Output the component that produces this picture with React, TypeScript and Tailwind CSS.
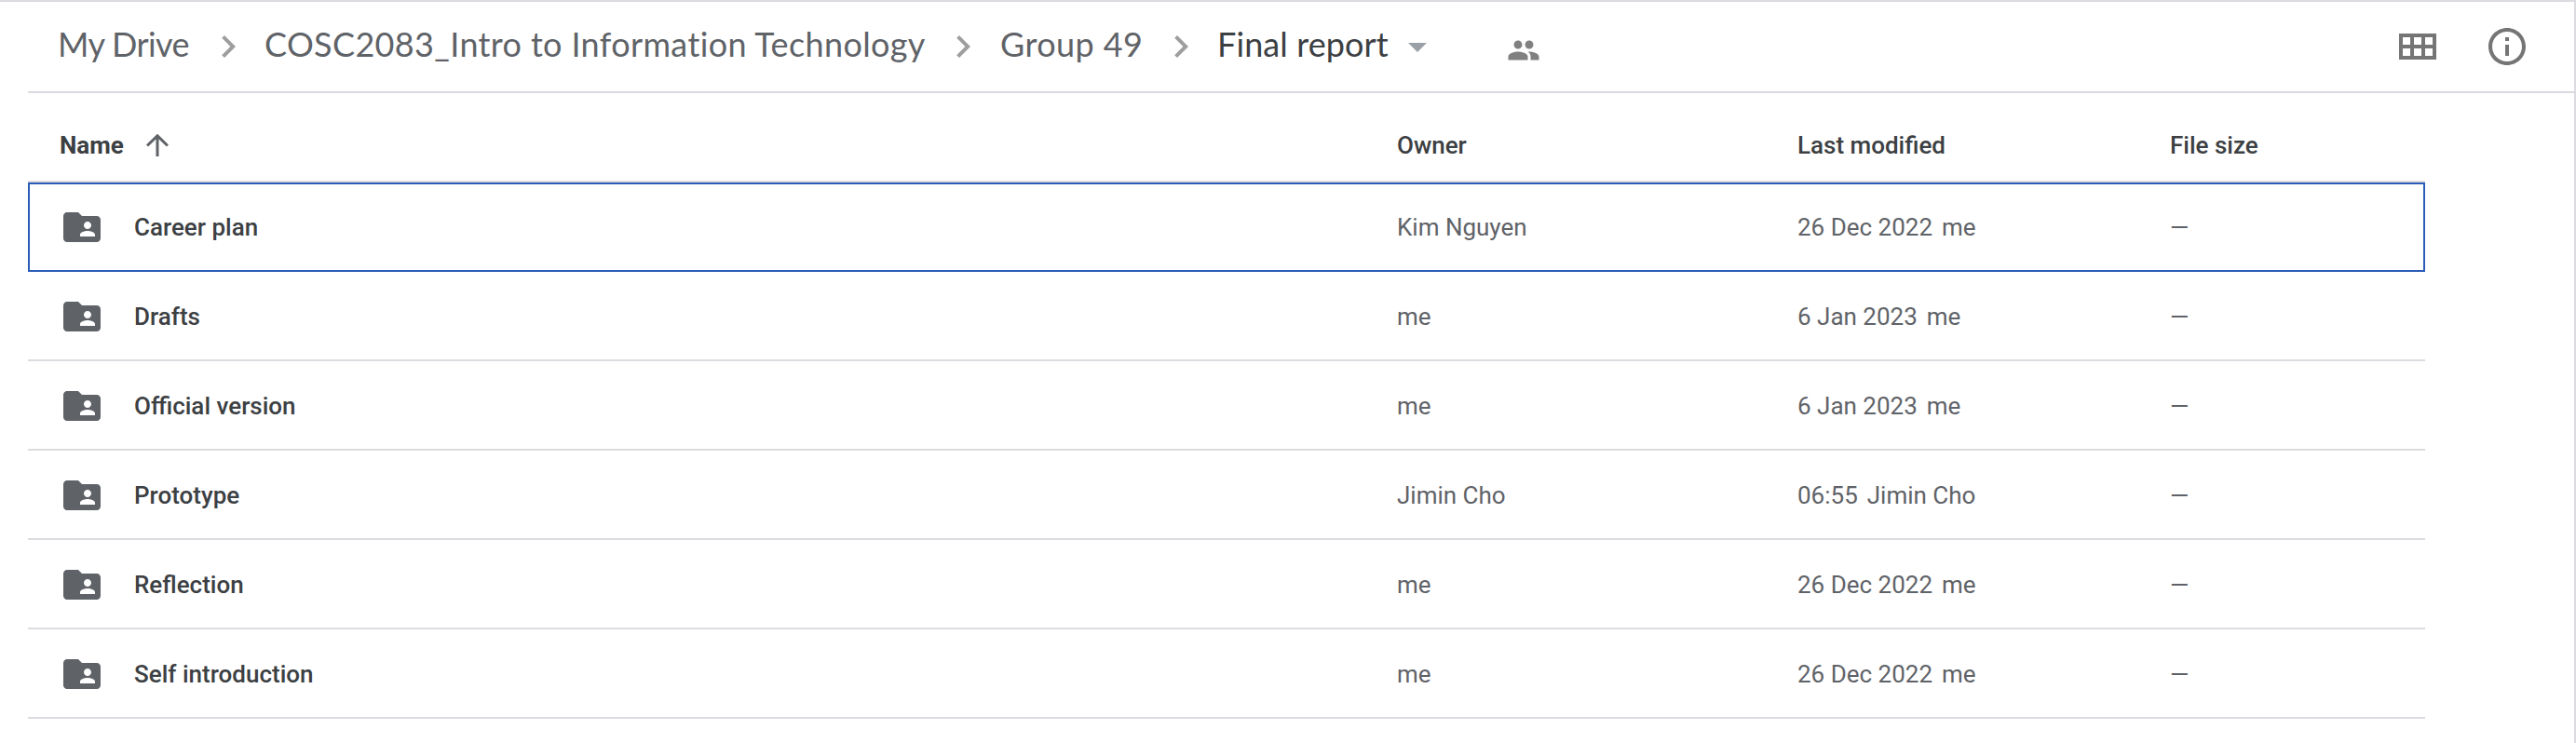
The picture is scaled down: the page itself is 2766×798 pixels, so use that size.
import React from "react";

type Item = { name: string; owner: string; date: string; by: string };

const items: Item[] = [
  { name: "Career plan", owner: "Kim Nguyen", date: "26 Dec 2022", by: "me" },
  { name: "Drafts", owner: "me", date: "6 Jan 2023", by: "me" },
  { name: "Official version", owner: "me", date: "6 Jan 2023", by: "me" },
  { name: "Prototype", owner: "Jimin Cho", date: "06:55", by: "Jimin Cho" },
  { name: "Reflection", owner: "me", date: "26 Dec 2022", by: "me" },
  { name: "Self introduction", owner: "me", date: "26 Dec 2022", by: "me" },
];

function Icon({ d, className }: { d: string; className: string }) {
  return (
    <svg viewBox="0 0 24 24" fill="currentColor" className={`shrink-0 ${className}`}>
      <path d={d} />
    </svg>
  );
}

const CHEVRON = "M10 6L8.59 7.41 13.17 12l-4.58 4.59L10 18l6-6z";
const FOLDER =
  "M20 6h-8l-2-2H4c-1.1 0-1.99.9-1.99 2L2 18c0 1.1.9 2 2 2h16c1.1 0 2-.9 2-2V8c0-1.1-.9-2-2-2zm-5 3c1.1 0 2 .9 2 2s-.9 2-2 2-2-.9-2-2 .9-2 2-2zm4 8h-8v-1c0-1.33 2.67-2 4-2s4 .67 4 2v1z";
const PEOPLE =
  "M16 11c1.66 0 2.99-1.34 2.99-3S17.66 5 16 5c-1.66 0-3 1.34-3 3s1.34 3 3 3zm-8 0c1.66 0 2.99-1.34 2.99-3S9.66 5 8 5C6.34 5 5 6.34 5 8s1.34 3 3 3zm0 2c-2.33 0-7 1.17-7 3.5V19h14v-2.5c0-2.33-4.67-3.5-7-3.5zm8 0c-.29 0-.62.02-.97.05 1.16.84 1.97 1.97 1.97 3.45V19h6v-2.5c0-2.33-4.67-3.5-7-3.5z";
const INFO =
  "M11 7h2v2h-2zm0 4h2v6h-2zm1-9C6.48 2 2 6.48 2 12s4.48 10 10 10 10-4.48 10-10S17.52 2 12 2zm0 18c-4.41 0-8-3.59-8-8s3.59-8 8-8 8 3.59 8 8-3.59 8-8 8z";
const GRID =
  "M2 5h20v14H2zM4 7v4h4V7zM10 7v4h4V7zM16 7v4h4V7zM4 13v4h4v-4zM10 13v4h4v-4zM16 13v4h4v-4z";

export default function App() {
  return (
    <div className="h-[798px] w-[2766px] overflow-hidden border-t-2 border-r-2 border-[#dbdbe0] bg-white font-[Roboto,sans-serif] text-[26px] leading-8 text-[#5f6368]">
      <header className="ml-[30px] flex h-[98px] items-center border-b-2 border-[#dbdbe0] whitespace-nowrap">
        <nav className="flex items-center pb-1 pl-[31px] font-[Lato,sans-serif] text-[36px] leading-[42px]">
          <span className="w-[160px] pb-0.5 pl-px tracking-[-0.6px]">My Drive</span>
          <Icon d={CHEVRON} className="mt-1 size-12 text-[#9e9e9e]" />
          <span className="w-[741px] pb-0.5 pl-[15px] tracking-[0.36px]">COSC2083_Intro to Information Technology</span>
          <Icon d={CHEVRON} className="mt-1 size-12 text-[#9e9e9e]" />
          <span className="w-[186px] pb-0.5 pl-4 tracking-[0.4px]">Group 49</span>
          <Icon d={CHEVRON} className="mt-1 size-12 text-[#9e9e9e]" />
          <span className="w-[206px] pb-0.5 pl-[15px] tracking-[0.1px] text-[#3c4043]">Final report</span>
          <Icon d="M7 10l5 5 5-5z" className="mt-1 size-12 text-[#9aa0a6]" />
        </nav>
        <Icon d={PEOPLE} className="mt-2 ml-[72px] size-9 text-[#808080]" />
        <div className="mr-12 ml-auto flex gap-12">
          <svg viewBox="0 0 24 24" className="size-12 text-[#757575]">
            <path d={GRID} fill="currentColor" fillRule="evenodd" />
          </svg>
          <Icon d={INFO} className="size-12 text-[#757575]" />
        </div>
      </header>
      <main className="ml-[30px] w-[2574px]">
        <div className="grid h-24 grid-cols-[1470px_430px_400px_1fr] items-center border-b-2 border-[#dbdbe0] pt-[18px] font-medium text-[#3c4043]">
          <div className="flex items-center pl-[34px] font-bold">
            <span>Name</span>
            <svg viewBox="0 0 24 24" className="ml-6 size-6 text-[#5f6368]" fill="none" stroke="currentColor" strokeWidth="3">
              <path d="M12 24V2M1 12.5L12 1.8l11 10.7" />
            </svg>
          </div>
          <span>Owner</span>
          <span>Last modified</span>
          <span>File size</span>
        </div>
        {items.map((it, i) => (
          <div
            key={it.name}
            className={`grid h-24 grid-cols-[1470px_430px_400px_1fr] items-center ${
              i === 0 ? "outline-2 -outline-offset-2 outline-[#2a5bb8]" : "border-b-2 border-[#dbdbe0] pt-0.5"
            }`}
          >
            <div className="flex items-center pl-[34px]">
              <Icon d={FOLDER} className="size-12" />
              <span className="pl-8 font-medium text-[#3c4043]">{it.name}</span>
            </div>
            <span>{it.owner}</span>
            <span className="flex gap-[10px]">
              <span>{it.date}</span>
              <span>{it.by}</span>
            </span>
            <span>—</span>
          </div>
        ))}
      </main>
    </div>
  );
}
